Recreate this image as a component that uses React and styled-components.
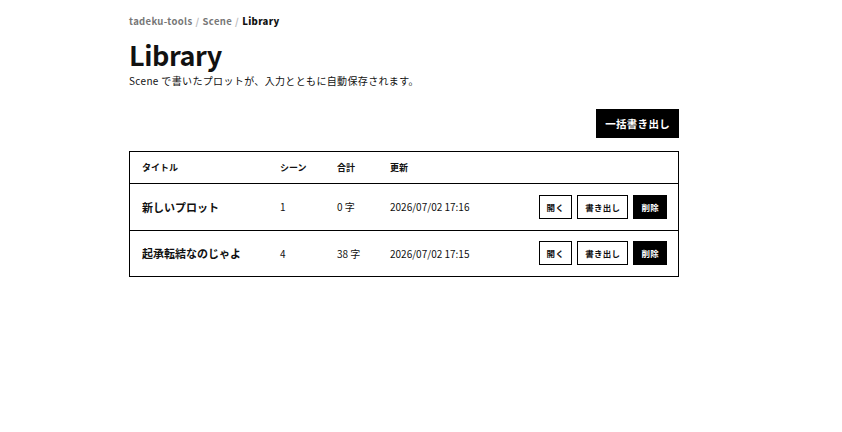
import React from 'react'
import styled, { createGlobalStyle } from 'styled-components'

const GlobalStyle = createGlobalStyle`
  body {
    margin: 0;
    background: #fff;
    color: #111;
    font-family: "Noto Sans CJK JP", "Noto Sans", sans-serif;
  }
`

const Page = styled.main`
  width: 550px;
  padding: 14px 0 0 129px;
`

const Crumbs = styled.nav`
  font-size: 9.5px;
  font-weight: 700;
  letter-spacing: 0.35px;
  color: #777;
  line-height: 14px;

  span { color: #bbb; margin: 0 3px; }
  b { color: #111; }
`

const Title = styled.h1`
  margin: 11px 0 0;
  font-size: 27px;
  line-height: 32px;
  font-weight: 700;
  letter-spacing: -0.4px;
`

const Lead = styled.p`
  margin: 2px 0 0;
  font-size: 10px;
  line-height: 16px;
  letter-spacing: 0.35px;
`

const Toolbar = styled.div`
  display: flex;
  justify-content: flex-end;
  margin-top: 20px;
`

const Button = styled.button`
  font-family: inherit;
  font-weight: 700;
  cursor: pointer;
  background: ${p => (p.$dark ? '#000' : '#fff')};
  color: ${p => (p.$dark ? '#fff' : '#111')};
  border: 1px solid #000;
  font-size: ${p => (p.$big ? '10.5px' : '8.5px')};
  height: ${p => (p.$big ? '29px' : '24px')};
  padding: 0 ${p => (p.$big ? '8px' : '7px')};
  letter-spacing: 0.3px;
`

const Table = styled.table`
  width: 100%;
  margin-top: 13px;
  border-collapse: collapse;
  border: 1px solid #000;
`

const Th = styled.th`
  text-align: left;
  font-size: 9px;
  font-weight: 700;
  height: 31px;
  padding: 0 0 0 12px;
  border-bottom: 1px solid #000;
  width: ${p => p.$w || 'auto'};
`

const Td = styled.td`
  font-size: ${p => (p.$strong ? '11px' : '10px')};
  font-weight: ${p => (p.$strong ? 700 : 400)};
  height: 45.5px;
  padding: 0 0 0 12px;
  border-bottom: 1px solid #000;
`

const Actions = styled.div`
  display: flex;
  justify-content: flex-end;
  gap: 5px;
  padding-right: 11px;
`

const plots = [
  { title: '新しいプロット', scenes: 1, chars: 0, updated: '2026/07/02 17:16' },
  { title: '起承転結なのじゃよ', scenes: 4, chars: 38, updated: '2026/07/02 17:15' },
]

const App = () => (
  <Page>
    <GlobalStyle />
    <Crumbs>
      tadeku-tools<span>/</span>Scene<span>/</span><b>Library</b>
    </Crumbs>
    <Title>Library</Title>
    <Lead>Scene で書いたプロットが、入力とともに自動保存されます。</Lead>

    <Toolbar>
      <Button $dark $big>一括書き出し</Button>
    </Toolbar>

    <Table>
      <thead>
        <tr>
          <Th $w="126px">タイトル</Th>
          <Th $w="45px">シーン</Th>
          <Th $w="41px">合計</Th>
          <Th $w="120px">更新</Th>
          <Th />
        </tr>
      </thead>
      <tbody>
        {plots.map(p => (
          <tr key={p.title}>
            <Td $strong>{p.title}</Td>
            <Td>{p.scenes}</Td>
            <Td>{p.chars} 字</Td>
            <Td>{p.updated}</Td>
            <Td>
              <Actions>
                <Button>開く</Button>
                <Button>書き出し</Button>
                <Button $dark>削除</Button>
              </Actions>
            </Td>
          </tr>
        ))}
      </tbody>
    </Table>
  </Page>
)

export default App
